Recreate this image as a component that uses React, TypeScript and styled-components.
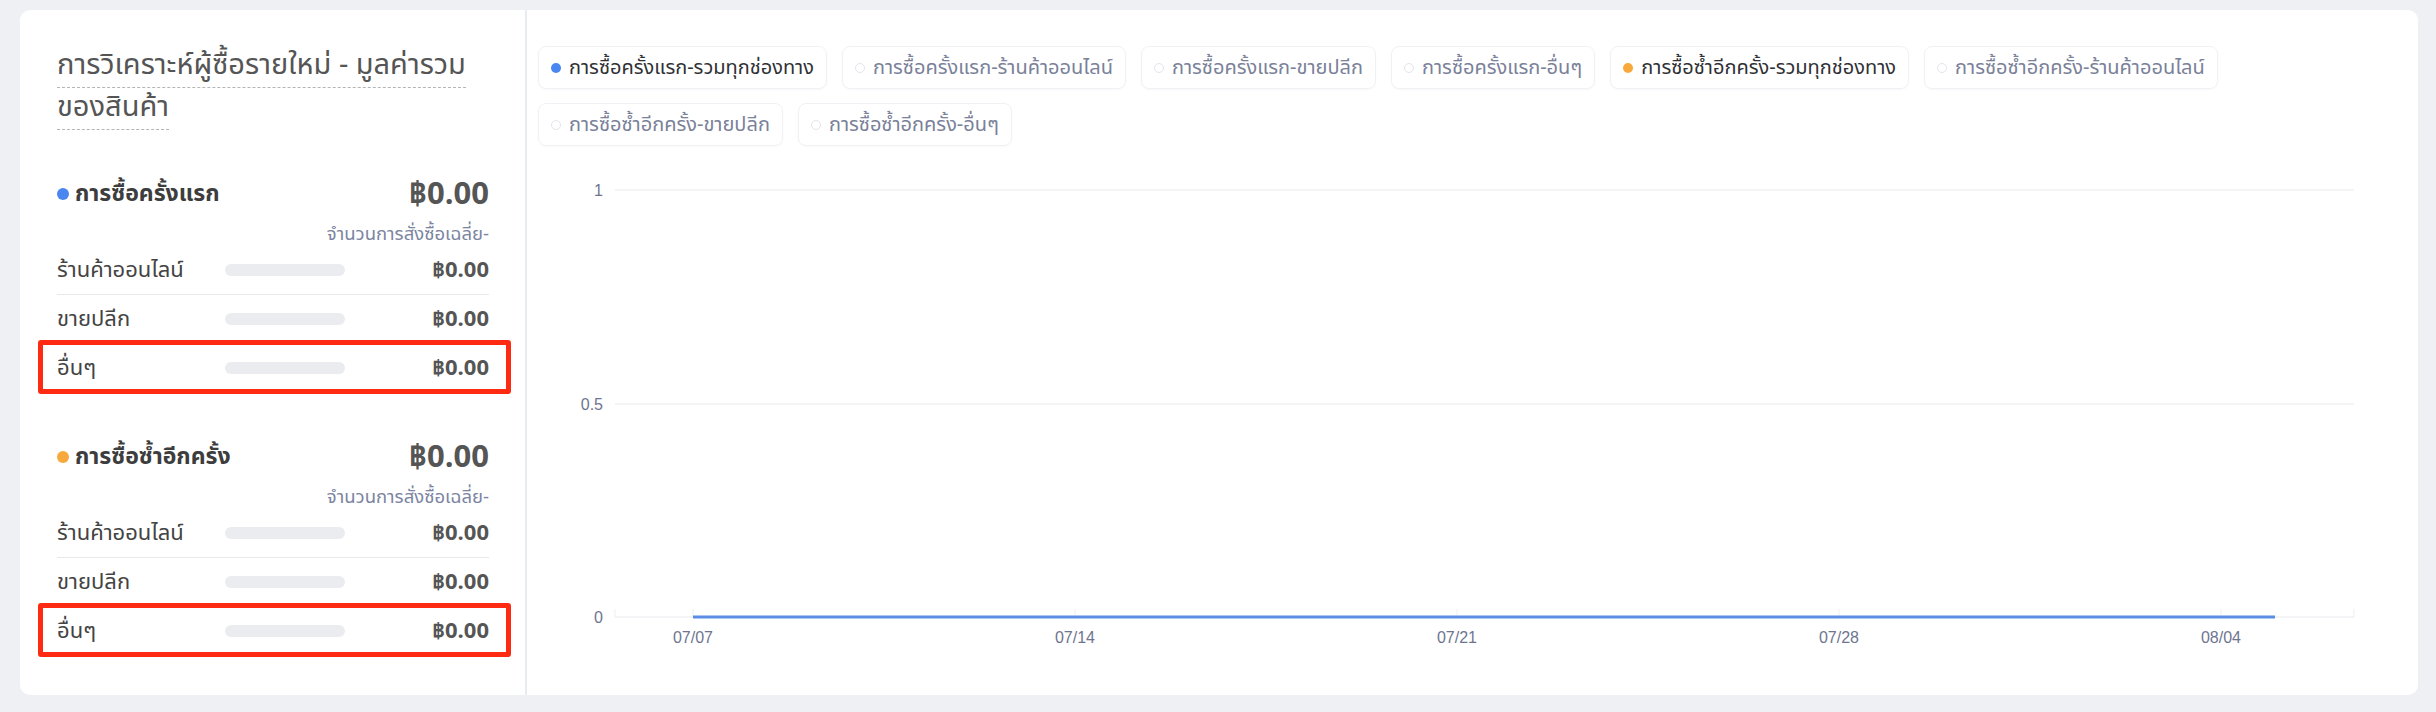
import React from "react";
import styled, { createGlobalStyle } from "styled-components";

const GlobalStyle = createGlobalStyle`
  body {
    margin: 0;
    background: #eef0f3;
    font-family: "Noto Sans Thai", "Noto Sans", "Liberation Sans", sans-serif;
  }
`;

const Page = styled.div`
  padding: 10px 18px 17px 20px;
`;

const Card = styled.div`
  display: flex;
  background: #fff;
  border-radius: 10px;
  height: 685px;
  overflow: hidden;
`;

const LeftPanel = styled.div`
  flex: 0 0 432px;
  padding: 34px 36px 0 37px;
  border-right: 2px solid #e8ebf0;
`;

const Title = styled.div`
  font-size: 29px;
  line-height: 42px;
  color: #555;
  margin-bottom: 46px;
`;

const TitleText = styled.span`
  border-bottom: 1px dashed #b5b5b5;
`;

const Group = styled.div`
  & + & {
    margin-top: 44px;
  }
`;

const GroupHeader = styled.div`
  display: flex;
  align-items: center;
  justify-content: space-between;
  height: 40px;
`;

const GroupLabel = styled.div`
  display: flex;
  align-items: center;
  gap: 6px;
  font-size: 23px;
  font-weight: 700;
  color: #3d3d3d;
`;

const Dot = styled.span<{ $color: string }>`
  width: 12px;
  height: 12px;
  border-radius: 50%;
  background: ${(p) => p.$color};
`;

const Amount = styled.div`
  font-size: 31px;
  font-weight: 700;
  color: #555;
`;

const Subtitle = styled.div`
  margin-top: 8px;
  height: 24px;
  line-height: 24px;
  text-align: right;
  font-size: 18.5px;
  color: #7b85a1;
`;

const Row = styled.div<{ $highlight?: boolean }>`
  position: relative;
  display: grid;
  grid-template-columns: 168px 120px 1fr;
  align-items: center;
  height: 48px;
  border-bottom: 1px solid #e8e9ed;
  &:last-child {
    border-bottom-color: transparent;
  }
  ${(p) =>
    p.$highlight &&
    `
    &::after {
      content: "";
      position: absolute;
      top: -4px;
      bottom: -2px;
      left: -19px;
      right: -22px;
      border: 5px solid #ff2a12;
      border-radius: 3px;
    }
  `}
`;

const RowLabel = styled.div`
  font-size: 22px;
  color: #444;
`;

const Bar = styled.div`
  height: 12px;
  border-radius: 6px;
  background: #ebecef;
`;

const RowValue = styled.div`
  text-align: right;
  font-size: 22px;
  font-weight: 700;
  color: #555;
`;

const RightPanel = styled.div`
  flex: 1;
  padding: 36px 0 0 11px;
  display: flex;
  flex-direction: column;
`;

const Legend = styled.div`
  display: flex;
  flex-wrap: wrap;
  gap: 14px 15px;
`;

const Chip = styled.div<{ $active?: boolean }>`
  display: flex;
  align-items: center;
  gap: 8px;
  height: 41px;
  padding: 0 12px;
  border: 1px solid #f0f1f4;
  border-radius: 8px;
  box-shadow: 0 1px 2px rgba(0, 0, 0, 0.03);
  font-size: 20px;
  color: ${(p) => (p.$active ? "#2f3135" : "#7a8199")};
`;

const ChipDot = styled.span<{ $color?: string }>`
  width: 10px;
  height: 10px;
  border-radius: 50%;
  box-sizing: border-box;
  ${(p) =>
    p.$color ? `background: ${p.$color};` : "border: 1px solid #e2e5ea;"}
`;

const Chart = styled.svg`
  margin-top: 16px;
  display: block;
  font-family: "Liberation Sans", Arial, sans-serif;
`;

const groups = [
  { label: "การซื้อครั้งแรก", color: "#4a86f0" },
  { label: "การซื้อซ้ำอีกครั้ง", color: "#f8a93b" },
];

const channels = ["ร้านค้าออนไลน์", "ขายปลีก", "อื่นๆ"];

const legend = [
  { label: "การซื้อครั้งแรก-รวมทุกช่องทาง", color: "#4a86f0" },
  { label: "การซื้อครั้งแรก-ร้านค้าออนไลน์" },
  { label: "การซื้อครั้งแรก-ขายปลีก" },
  { label: "การซื้อครั้งแรก-อื่นๆ" },
  { label: "การซื้อซ้ำอีกครั้ง-รวมทุกช่องทาง", color: "#f8a93b" },
  { label: "การซื้อซ้ำอีกครั้ง-ร้านค้าออนไลน์" },
  { label: "การซื้อซ้ำอีกครั้ง-ขายปลีก" },
  { label: "การซื้อซ้ำอีกครั้ง-อื่นๆ" },
];

// chart coords are relative to the right panel's content edge
const X0 = 77;
const X1 = 1816;
const yTicks = [
  { v: "1", y: 28 },
  { v: "0.5", y: 242 },
  { v: "0", y: 455 },
];
const dates = ["07/07", "07/14", "07/21", "07/28", "08/04"];

const LineChart = () => {
  const tickX = dates.map((_, i) => 155 + i * 382);
  return (
    <Chart width={1860} height={500}>
      {yTicks.map((t) => (
        <g key={t.v}>
          <line x1={X0} x2={X1} y1={t.y} y2={t.y} stroke="#f0f1f3" strokeWidth={1.5} />
          <text x={65} y={t.y + 6} textAnchor="end" fontSize={16} fill="#6e7590">
            {t.v}
          </text>
        </g>
      ))}
      {[X0, ...tickX, X1].map((x) => (
        <line key={x} x1={x} x2={x} y1={447} y2={455} stroke="#eeeff2" strokeWidth={1} />
      ))}
      <line x1={155} x2={1737} y1={455} y2={455} stroke="#5b8de6" strokeWidth={3} />
      {dates.map((d, i) => (
        <text key={d} x={tickX[i]} y={481} textAnchor="middle" fontSize={16} fill="#6e7590">
          {d}
        </text>
      ))}
    </Chart>
  );
};

const App: React.FC = () => {
  return (
    <>
      <GlobalStyle />
      <Page>
        <Card>
          <LeftPanel>
            <Title>
              <TitleText>การวิเคราะห์ผู้ซื้อรายใหม่ - มูลค่ารวมของสินค้า</TitleText>
            </Title>
            {groups.map((g) => (
              <Group key={g.label}>
                <GroupHeader>
                  <GroupLabel>
                    <Dot $color={g.color} />
                    {g.label}
                  </GroupLabel>
                  <Amount>฿0.00</Amount>
                </GroupHeader>
                <Subtitle>จำนวนการสั่งซื้อเฉลี่ย-</Subtitle>
                {channels.map((c, i) => (
                  <Row key={c} $highlight={i === 2}>
                    <RowLabel>{c}</RowLabel>
                    <Bar />
                    <RowValue>฿0.00</RowValue>
                  </Row>
                ))}
              </Group>
            ))}
          </LeftPanel>
          <RightPanel>
            <Legend>
              {legend.map((l) => (
                <Chip key={l.label} $active={!!l.color}>
                  <ChipDot $color={l.color} />
                  {l.label}
                </Chip>
              ))}
            </Legend>
            <LineChart />
          </RightPanel>
        </Card>
      </Page>
    </>
  );
};

export default App;
